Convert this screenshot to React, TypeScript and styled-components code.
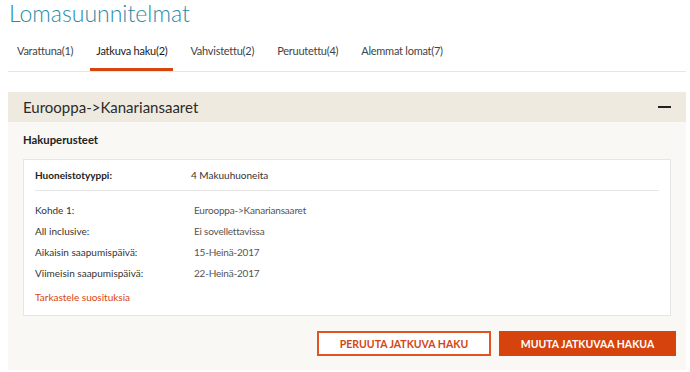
import styled, { createGlobalStyle } from 'styled-components';

const GlobalStyle = createGlobalStyle`
  body {
    margin: 0;
    background: #ffffff;
    font-family: Lato, "Open Sans", Arial, sans-serif;
    color: #333333;
  }
`;

const Page = styled.div`
  padding: 0 4px 0 8px;
`;

const Title = styled.h1`
  margin: 0;
  font-size: 23px;
  line-height: 26px;
  font-weight: 300;
  color: #2a8aa6;
  padding-left: 1px;
`;

const TabBar = styled.nav`
  display: flex;
  gap: 11px;
  margin-top: 15px;
  padding-left: 3px;
  border-bottom: 1px solid #e6e6e6;
`;

const Tab = styled.a<{ $active?: boolean }>`
  padding: 0 6px 7px;
  font-size: 11px;
  letter-spacing: -0.25px;
  line-height: 20px;
  color: ${(p) => (p.$active ? '#1a1a1a' : '#444444')};
  border-bottom: 3px solid ${(p) => (p.$active ? '#d7450f' : 'transparent')};
  text-decoration: none;
  cursor: pointer;
`;

const Panel = styled.section`
  margin-top: 20px;
  background: #f9f8f5;
`;

const PanelHeader = styled.header`
  height: 30px;
  display: flex;
  align-items: center;
  justify-content: space-between;
  padding: 0 15px;
  background: #eeeae0;
`;

const PanelTitle = styled.h2`
  margin: 0;
  font-size: 15px;
  font-weight: 400;
  color: #2b2b2b;
`;

const Collapse = styled.span`
  width: 13px;
  height: 2px;
  background: #222222;
`;

const PanelBody = styled.div`
  padding: 9px 15px 14px;
`;

const SectionTitle = styled.h3`
  margin: 0;
  font-size: 11.3px;
  line-height: 18px;
  font-weight: 700;
  color: #222222;
`;

const Card = styled.div`
  margin-top: 10px;
  background: #ffffff;
  border: 1px solid #e6e6e6;
  padding: 5px 11px 8px;
`;

const TypeRow = styled.div`
  display: grid;
  grid-template-columns: 156px 1fr;
  font-size: 10px;
  line-height: 20px;
  padding-bottom: 5px;
  border-bottom: 1px solid #e6e6e6;
`;

const TypeLabel = styled.span`
  font-weight: 700;
  color: #222222;
`;

const DetailList = styled.dl`
  margin: 0;
  padding-top: 9px;
  display: grid;
  grid-template-columns: 159px 1fr;
  font-size: 10px;
  line-height: 21px;
  color: #333333;
`;

const Term = styled.dt`
  margin: 0;
`;

const Value = styled.dd`
  margin: 0;
  color: #555555;
  letter-spacing: -0.2px;
`;

const Suggest = styled.a`
  display: block;
  margin-top: 3px;
  font-size: 10px;
  line-height: 20px;
  color: #d7450f;
  cursor: pointer;
`;

const Actions = styled.div`
  display: flex;
  justify-content: flex-end;
  gap: 8px;
  margin: 15px -5px 0 0;
`;

const Button = styled.button<{ $primary?: boolean }>`
  height: 25px;
  width: ${(p) => (p.$primary ? '177px' : '174px')};
  font-family: inherit;
  font-size: 10.5px;
  font-weight: 700;
  text-transform: uppercase;
  cursor: pointer;
  border: 2px solid ${(p) => (p.$primary ? '#d6430c' : '#df5422')};
  background: ${(p) => (p.$primary ? '#d6430c' : '#ffffff')};
  color: ${(p) => (p.$primary ? '#ffffff' : '#d24515')};
`;

const tabs = [
  { label: 'Varattuna(1)' },
  { label: 'Jatkuva haku(2)', active: true },
  { label: 'Vahvistettu(2)' },
  { label: 'Peruutettu(4)' },
  { label: 'Alemmat lomat(7)' },
];

const details = [
  ['Kohde 1:', 'Eurooppa->Kanariansaaret'],
  ['All inclusive:', 'Ei sovellettavissa'],
  ['Aikaisin saapumispäivä:', '15-Heinä-2017'],
  ['Viimeisin saapumispäivä:', '22-Heinä-2017'],
];

const App = () => (
  <Page>
    <GlobalStyle />
    <Title>Lomasuunnitelmat</Title>
    <TabBar>
      {tabs.map((t) => (
        <Tab key={t.label} $active={t.active}>{t.label}</Tab>
      ))}
    </TabBar>
    <Panel>
      <PanelHeader>
        <PanelTitle>Eurooppa-&gt;Kanariansaaret</PanelTitle>
        <Collapse />
      </PanelHeader>
      <PanelBody>
        <SectionTitle>Hakuperusteet</SectionTitle>
        <Card>
          <TypeRow>
            <TypeLabel>Huoneistotyyppi:</TypeLabel>
            <span>4 Makuuhuoneita</span>
          </TypeRow>
          <DetailList>
            {details.map(([term, value]) => [
              <Term key={term}>{term}</Term>,
              <Value key={value}>{value}</Value>,
            ])}
          </DetailList>
          <Suggest>Tarkastele suosituksia</Suggest>
        </Card>
        <Actions>
          <Button>Peruuta jatkuva haku</Button>
          <Button $primary>Muuta jatkuvaa hakua</Button>
        </Actions>
      </PanelBody>
    </Panel>
  </Page>
);

export default App;
